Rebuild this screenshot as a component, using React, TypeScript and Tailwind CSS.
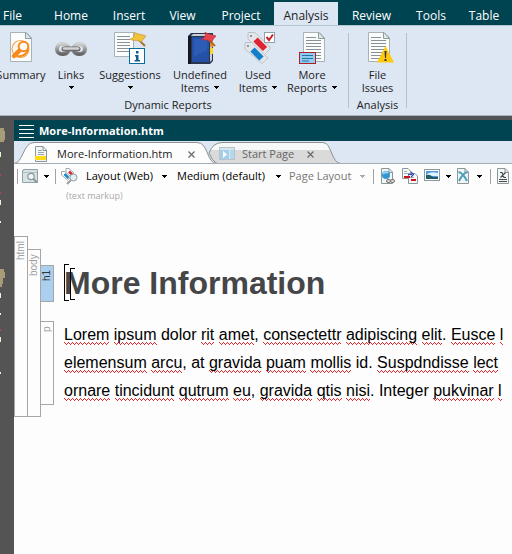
import React from "react";

const ribbonTabs = [
  { name: "File", size: "w-[41px] pr-4" },
  { name: "Home", size: "w-[60px]" },
  { name: "Insert", size: "w-14" },
  { name: "View", size: "w-[51px]" },
  { name: "Project", size: "w-[66px]" },
  { name: "Analysis", size: "w-16" },
  { name: "Review", size: "w-[67px]" },
  { name: "Tools", size: "w-[52px]" },
  { name: "Table", size: "w-[54px]" },
];

function Arrow({ className = "fill-black" }: { className?: string }) {
  return (
    <svg className={"inline-block h-[3px] w-[5px] shrink-0 " + className} viewBox="0 0 5 3" shapeRendering="crispEdges" aria-hidden="true">
      <path d="M0 0H5V1H4V2H3V3H2V2H1V1H0Z" />
    </svg>
  );
}

function PageShape({ x = 0, y = 0, w = 21, h = 30 }: { x?: number; y?: number; w?: number; h?: number }) {
  return (
    <g transform={`translate(${x} ${y})`}>
      <path d={`M.5 .5H${w - 5}L${w + 0.5} 6V${h - 0.5}H.5Z`} fill="#fbfcfc" stroke="#a9b3b5" />
      <path d={`M${w - 5.5} .5V6.500H${w + 0.5}L${w - 5} .5Z`} fill="#dfeae8" stroke="#8d9a9d" />
    </g>
  );
}

function Lines({ x, y, w, n, step = 3 }: { x: number; y: number; w: number; n: number; step?: number }) {
  return (
    <g fill="#8a9194">
      {Array.from({ length: n }, (_, i) => (
        <rect key={i} x={x} y={y + i * step} width={i < 1 ? w - 5 : w} height="1" />
      ))}
    </g>
  );
}

function SummaryIcon() {
  return (
    <svg width="32" height="32" viewBox="0 0 32 32" aria-hidden="true">
      <PageShape x={5} />
      <circle cx="15.500" cy="17" r="8.500" fill="#fff6ec" stroke="#f3a75a" strokeWidth="1.200" />
      <path d="M14.500 18.500L9 24" stroke="#f58a1f" strokeWidth="4.500" strokeLinecap="round" />
      <circle cx="18.500" cy="14.500" r="4.800" fill="#fffaf4" stroke="#f58a1f" strokeWidth="2" />
      <path d="M12 24C17 25 22 22 23 18" fill="none" stroke="#f58a1f" strokeWidth="2" />
    </svg>
  );
}

function LinksIcon() {
  return (
    <svg width="34" height="32" viewBox="0 0 34 32" aria-hidden="true">
      <defs>
        <linearGradient id="steel" x1="0" y1="0" x2="0" y2="1">
          <stop offset="0" stopColor="#d0d0d0" />
          <stop offset=".5" stopColor="#9c9c9c" />
          <stop offset="1" stopColor="#666" />
        </linearGradient>
      </defs>
      <g fill="none" stroke="url(#steel)" strokeWidth="4">
        <rect x="3" y="12" width="11.500" height="10" rx="5" />
        <rect x="19.500" y="12" width="11.500" height="10" rx="5" />
      </g>
      <path d="M10 17H24" stroke="#6c6c6c" strokeWidth="5" strokeLinecap="round" />
      <path d="M10 16.500H24" stroke="#d4d4d4" strokeWidth="2.500" strokeLinecap="round" />
    </svg>
  );
}

function SuggestionsIcon() {
  return (
    <svg width="32" height="32" viewBox="0 0 32 32" aria-hidden="true">
      <path d="M.5 .5H19.500V24.500H.5Z" fill="#fbfcfc" stroke="#a9b3b5" />
      <g fill="#8a9194">
        {[4, 7, 10, 13, 16, 19].map((y) => <rect key={y} x="3" y={y} width="13" height="1" />)}
      </g>
      <path d="M24 7L31 14" stroke="#a77432" strokeWidth="2" />
      <path d="M20 0C24 3 28 2 32 4L27 10C24 7 20 10 16 7C20 6 21 3 20 0Z" fill="#f2c23a" stroke="#bd9130" strokeWidth=".6" />
      <rect x="15.500" y="16.500" width="15" height="15" fill="#fff" stroke="#0b6a9b" />
      <path d="M22 19H24.500V21.500H22ZM21 23H24.500V28H26V29.500H20.500V28H22V24.500H21Z" fill="#0b5f92" />
    </svg>
  );
}

function UndefinedIcon() {
  return (
    <svg width="32" height="32" viewBox="0 0 32 32" aria-hidden="true">
      <path d="M4 4L7 1H29V29L26 32H4Z" fill="#2a3550" />
      <path d="M9 2H27L25 4H7Z" fill="#c9d0d8" />
      <path d="M8 5H25V30H8Z" fill="#2450a8" />
      <path d="M10 7H23V18L10 25Z" fill="#2c5cb6" />
      <path d="M26 5L28 3V28L26 30Z" fill="#c8ced3" />
      <rect x="26" y="7" width="3" height="8" fill="#f28b23" />
      <rect x="26" y="16" width="3" height="6" fill="#f8d51f" />
      <path d="M4 4H7V32H4Z" fill="#141822" />
      <path d="M24 7L31 14" stroke="#a66b35" strokeWidth="2" />
      <path d="M21 0C24 3 28 2 32 4L27 10C24 7 21 9 17 7C21 6 22 3 21 0Z" fill="#e54350" stroke="#a82630" strokeWidth=".6" />
    </svg>
  );
}

function UsedIcon() {
  return (
    <svg width="34" height="32" viewBox="0 0 34 32" aria-hidden="true">
      <path d="M7 .5H14L29 15V17L23 23L7 7Z" fill="#e3e7ea" stroke="#bcc3c9" />
      <rect x="9" y="3" width="2" height="2" fill="#8f999f" />
      <path d="M14.500 7.500L24 17" stroke="#df2332" strokeWidth="6" />
      <path d="M4 10.500H11L27 26L21 31.500L4 17Z" fill="#e3e7ea" stroke="#bcc3c9" />
      <rect x="6" y="13" width="2" height="2" fill="#8f999f" />
      <path d="M11.500 17.500L20.500 26.500" stroke="#137ecb" strokeWidth="6" />
      <rect x="23.500" y=".5" width="10" height="10" fill="#fff" stroke="#8fa2a5" />
      <path d="M25.500 5L28 8L32 2.500" fill="none" stroke="#c4232c" strokeWidth="2" />
    </svg>
  );
}

function MoreIcon() {
  return (
    <svg width="32" height="32" viewBox="0 0 32 32" aria-hidden="true">
      <PageShape x={7} w={21} h={30} />
      <Lines x={10} y={5} w={15} n={8} />
      <rect x="3.500" y="20.500" width="16" height="11" fill="#8fcdf4" stroke="#b01f24" />
      <path d="M6 23.500H17M6 26.500H17M6 29H13" stroke="#28739d" />
    </svg>
  );
}

function IssuesIcon() {
  return (
    <svg width="32" height="32" viewBox="0 0 32 32" aria-hidden="true">
      <PageShape x={6} w={21} h={30} />
      <Lines x={9} y={5} w={15} n={8} />
      <path d="M23.500 14L32 30.500H15Z" fill="#ffc90e" />
      <path d="M22.500 19H24.500L24 26H23ZM22.500 27H24.500V29H22.500Z" fill="#343434" />
    </svg>
  );
}

type Command = { icon: React.ReactNode; top: string; bottom?: string; arrow?: boolean; size: string };

const reports: Command[] = [
  { icon: <SummaryIcon />, top: "Summary", size: "w-[66px]" },
  { icon: <LinksIcon />, top: "Links", arrow: true, size: "w-[34px]" },
  { icon: <SuggestionsIcon />, top: "Suggestions", arrow: true, size: "w-[84px]" },
  { icon: <UndefinedIcon />, top: "Undefined", bottom: "Items", arrow: true, size: "w-14" },
  { icon: <UsedIcon />, top: "Used", bottom: "Items", arrow: true, size: "w-[60px]" },
  { icon: <MoreIcon />, top: "More", bottom: "Reports", arrow: true, size: "w-12" },
];

function RibbonButton({ icon, top, bottom, arrow, size }: Command) {
  return (
    <button className={"flex shrink-0 flex-col items-center whitespace-nowrap leading-[13px] " + size}>
      {icon}
      <span className="mt-1">{top}</span>
      <span className="flex h-[13px] items-center gap-[5px]">
        {bottom}
        {arrow && <Arrow />}
      </span>
    </button>
  );
}

function Choice({ label, value, size, muted }: { label: string; value: string; size: string; muted?: boolean }) {
  return (
    <label className="flex shrink-0 items-center gap-[5px]">
      <span className="sr-only">{label}</span>
      <select className={"appearance-none bg-transparent outline-none " + size + (muted ? " text-[#777]" : " text-black")}>
        <option>{value}</option>
      </select>
      <Arrow className={muted ? "fill-[#aaa]" : "fill-black"} />
    </label>
  );
}

function Rule() {
  return <span className="h-[15px] w-px shrink-0 bg-[#a2a2a2]" />;
}

function PreviewIcon() {
  return (
    <svg width="16" height="16" viewBox="0 0 16 16" aria-hidden="true">
      <path d="M.5 2.500H1.500V1.500H15.500V14.500H.5Z" fill="#d5e3e5" stroke="#93a3a5" />
      <path d="M1 4.500H15" stroke="#b4c1c3" />
      <circle cx="9" cy="8.500" r="3.200" fill="#eff7f8" stroke="#889799" strokeWidth="1.200" />
      <path d="M11 10.500L15 14.500" stroke="#889799" strokeWidth="1.800" />
    </svg>
  );
}

function TagsIcon() {
  return (
    <svg width="17" height="17" viewBox="0 0 17 17" aria-hidden="true">
      <path d="M5 .5H8L13 5L9 9L5 4Z" fill="#fff" stroke="#a1a9ac" />
      <path d="M8 3.500L11 6.500" stroke="#de2332" strokeWidth="2.500" />
      <path d="M.5 3.500H4L10 9L6.500 12L.5 7Z" fill="#fff" stroke="#a1a9ac" />
      <path d="M3.500 6L7.500 10" stroke="#1788cc" strokeWidth="2.500" />
      <path d="M10 12L6 16" stroke="#9a9c9e" strokeWidth="2" />
      <circle cx="12.500" cy="9.500" r="3.500" fill="#e3eff1" stroke="#939fa3" />
    </svg>
  );
}

function SmallPage({ children }: { children?: React.ReactNode }) {
  return (
    <svg width="14" height="16" viewBox="0 0 14 16" className="shrink-0" aria-hidden="true">
      <path d="M.5 .5H8L11.500 4V15.500H.5Z" fill="#f2f6f7" stroke="#89979a" />
      <path d="M8 .5V4.500H11.500" fill="none" stroke="#89979a" />
      {children}
    </svg>
  );
}

function Toolbar() {
  return (
    <div role="toolbar" aria-label="Editor" className="flex h-6 items-center pl-[3px] whitespace-nowrap">
      <Rule />
      <button aria-label="Preview" className="ml-1 flex items-center gap-1.5"><PreviewIcon /><Arrow /></button>
      <span className="ml-1.5 flex"><Rule /></span>
      <button aria-label="Tags" className="mr-2 ml-[5px] shrink-0"><TagsIcon /></button>
      <Choice label="Layout" value="Layout (Web)" size="w-[71px]" />
      <span className="ml-2.5 flex"><Choice label="Medium" value="Medium (default)" size="w-[94px]" /></span>
      <span className="ml-2 flex"><Choice label="Page layout" value="Page Layout" size="w-[66px]" muted /></span>
      <span className="ml-2 flex"><Rule /></span>
      <button aria-label="Hyperlink" className="ml-[7px]">
        <SmallPage>
          <circle cx="5" cy="7" r="4" fill="#3494d4" />
          <path d="M2 6Q4 3 7 5" fill="none" stroke="#9bd3f5" strokeWidth="2" />
          <rect x="5.500" y="11.500" width="4" height="3" rx="1.500" fill="#ddd" stroke="#707070" />
          <rect x="9.500" y="11.500" width="4" height="3" rx="1.500" fill="#ddd" stroke="#707070" />
        </SmallPage>
      </button>
      <button aria-label="Cross-reference" className="ml-[7px] shrink-0">
        <svg width="16" height="16" viewBox="0 0 16 16" aria-hidden="true">
          <path d="M.5 .5H6L8.500 3V10.500H.5Z" fill="#f6f8f8" stroke="#8b989b" />
          <path d="M6.500 5.500H13L15.500 8V15.500H6.500Z" fill="#f6f8f8" stroke="#8b989b" />
          <path d="M2 3.500H5M2 5.500H6M8 9.500H12" stroke="#a6afb1" />
          <path d="M2 8H8V10H2ZM9 11H14V13H9Z" fill="#cf1018" />
          <path d="M6 6.500H10M9 4L11.500 6.500L9 9" fill="none" stroke="#274ac5" strokeWidth="1.200" />
        </svg>
      </button>
      <button aria-label="Image" className="ml-1.5 flex shrink-0 items-center gap-1.5">
        <svg width="16" height="16" viewBox="0 0 16 16" aria-hidden="true">
          <rect x=".5" y="1.500" width="15" height="11" fill="#fff" stroke="#8b9b9f" />
          <rect x="2" y="3" width="12" height="8" fill="#4f9be6" />
          <path d="M3 6Q7 3 14 5V8H2Z" fill="#dff3ff" />
          <path d="M2 7Q6 6 9 9H14V11H2Z" fill="#245d64" />
        </svg>
        <Arrow />
      </button>
      <button aria-label="Variable" className="ml-1.5 flex shrink-0 items-center gap-1.5">
        <SmallPage>
          <path d="M2 13Q6 5 10.500 4M10 13Q6 5 1.500 4" fill="none" stroke="#4b9fb8" strokeWidth="2" />
        </SmallPage>
        <Arrow />
      </button>
      <span className="ml-2 flex"><Rule /></span>
      <button aria-label="Equation" className="ml-1.5">
        <SmallPage><path d="M3 4.500H5L7 9.500H9M8.500 4.500L3.500 9.500M2 11.500H10M2 13.500H10" fill="none" stroke="#454b4d" strokeWidth="1.200" /></SmallPage>
      </button>
    </div>
  );
}

function Close() {
  return (
    <svg width="7" height="7" viewBox="0 0 7 7" aria-hidden="true">
      <path d="M.5 .5L6.500 6.500M6.500 .5L.5 6.500" stroke="#686868" strokeWidth="1.200" />
    </svg>
  );
}

function DocumentTabs() {
  return (
    <div role="tablist" aria-label="Documents" className="relative flex h-[23px] items-center overflow-hidden border-b border-[#a5adb6] bg-[#dde6f3] pt-1">
      <svg className="absolute top-0 left-0 h-[23px] w-[330px]" viewBox="0 0 330 23" aria-hidden="true">
        <path d="M195 12Q199 1.500 208 1.500H309C318 1.500 317 22.500 327 22.500H203Q198 20 195 12Z" fill="#d9dad9" />
        <path d="M196 9Q200 2 208 2H309Q315 2 316 9Z" fill="#f7f8f8" />
        <path d="M195 12Q199 1.500 208 1.500H309C318 1.500 317 22.500 327 22.500H203Q198 20 195 12" fill="none" stroke="#8d9193" />
        <path d="M0 23C9 23 9 1.500 20 1.500H183C195 1.500 192 22.500 203 22.500V23Z" fill="#fdfdfd" />
        <path d="M0 22.500C9 22.500 9 1.500 20 1.500H183C195 1.500 192 22.500 203 22.500" fill="none" stroke="#8d9193" />
      </svg>
      <div className="relative flex w-[205px] shrink-0 items-center pl-[21px]">
        <button role="tab" aria-selected="true" className="flex w-[143px] items-center gap-2 whitespace-nowrap">
          <SmallPage><path d="M3 4.500H7M3 6.500H9M3 8.500H9" stroke="#9ca6a8" /><rect y="10" width="11" height="4" fill="#ffda16" /></SmallPage>
          More-Information.htm
        </button>
        <button aria-label="Close More-Information.htm" className="ml-2.5"><Close /></button>
      </div>
      <div className="relative flex shrink-0 items-center text-[#666]">
        <button role="tab" aria-selected="false" className="flex w-[80px] items-center gap-[7px] whitespace-nowrap">
          <svg width="16" height="14" viewBox="0 0 16 14" className="shrink-0" aria-hidden="true">
            <rect x=".5" y=".5" width="15" height="12" fill="#d9e5ed" stroke="#b9c2c7" />
            <rect x="1" y="3" width="9" height="9" fill="#a3cfea" />
            <path d="M4 4L8 7.500L4 11Z" fill="#fff" />
            <path d="M11 3H15V12H11Z" fill="#b4d9ed" />
          </svg>
          Start Page
        </button>
        <button aria-label="Close Start Page" className="ml-2"><Close /></button>
      </div>
    </div>
  );
}

/* A misspelled word, marked with a red zigzag. */
function W({ children }: { children: string }) {
  return (
    <span className="bg-[linear-gradient(90deg,#e8252b_1px,transparent_1px),linear-gradient(90deg,#e8252b_1px,transparent_1px),linear-gradient(90deg,#e8252b_1px,transparent_1px)] [background-size:4px_1px,2px_1px,4px_1px] [background-position:0_16px,1px_17px,2px_18px] bg-repeat-x pb-[3px]">
      {children}
    </span>
  );
}

const tag = "flex w-[14px] shrink-0 rotate-180 items-center justify-end border border-[#a6a6a6] pb-1 text-[10px] leading-3 [writing-mode:vertical-rl] font-['Liberation_Sans',Arial,sans-serif]";

function Editor() {
  return (
    <section aria-label="Document" className="overflow-hidden">
      <p className="h-12 pt-0.5 pl-[52px] text-[9px] leading-3 text-[#aaa]">(text markup)</p>
      <div className="flex">
        <div className={tag + " text-[#a0a0a0]"}>html</div>
        <div className="-ml-px flex pt-[13px]">
          <div className={tag + " text-[#a0a0a0]"}>body</div>
          <div className="-ml-px pt-4 pb-3 font-['Liberation_Sans',Arial,sans-serif] whitespace-nowrap">
            <div className="flex gap-2.5">
              <div className={tag + " bg-[#abd0ef] text-[#333]"}>h1</div>
              <h1 className="relative text-[32px] leading-[37px] font-bold text-[#454648]">
                More Information
                <span className="absolute -top-px left-0 h-[37px] w-[5px] border-y border-l border-black" />
                <span className="absolute top-[3px] left-1.5 h-8 w-[5px] border-y border-l border-black" />
              </h1>
            </div>
            <div className="mt-[19px] flex gap-2.5">
              <div className={tag + " text-[#a0a0a0]"}>p</div>
              <p className="text-base leading-7 text-black">
                <W>Lorem</W> <W>ipsum</W> dolor <W>rit</W> <W>amet</W>, <W>consectettr</W> <W>adipiscing</W> <W>elit</W>. <W>Eusce</W> <W>l</W>
                <br />
                <W>elemensum</W> <W>arcu</W>, at <W>gravida</W> <W>puam</W> <W>mollis</W> id. <W>Suspdndisse</W> <W>lect</W>
                <br />
                <W>ornare</W> <W>tincidunt</W> <W>qutrum</W> <W>eu</W>, <W>gravida</W> <W>qtis</W> <W>nisi</W>. Integer <W>pukvinar</W> <W>l</W>
              </p>
            </div>
          </div>
        </div>
      </div>
    </section>
  );
}

function Rail() {
  return (
    <aside className="w-[14px] shrink-0 bg-[#545454]">
      <svg width="6" height="270" viewBox="0 0 6 270" aria-hidden="true">
        <path d="M0 12H4V15H5V24H4V26H0ZM0 153H4V156H5V162H3V168H2V171H0Z" fill="#a89b78" />
        <path d="M0 36H1V41H0ZM0 84H1V89H0ZM0 105H1V107H0ZM0 177H1V182H0ZM0 197H1V199H0ZM0 221H1V226H0ZM0 256H1V258H0Z" fill="#f5f0dc" />
        <path d="M0 58H1V60H0ZM0 76H1V78H0ZM0 213H1V215H0Z" fill="#ba4545" />
      </svg>
    </aside>
  );
}

export default function App() {
  return (
    <div className="flex min-h-screen flex-col overflow-hidden bg-[#fdfdfd] font-['Open_Sans','Noto_Sans',sans-serif] text-[11px] leading-4 text-[#1c1c1c]">
      <nav role="tablist" aria-label="Ribbon" className="flex h-[26px] overflow-hidden border-b border-[#b3c6cf] bg-[#004351] pt-0.5 text-xs text-white">
        {ribbonTabs.map(({ name, size }) => (
          <button
            key={name}
            role="tab"
            aria-selected={name === "Analysis"}
            className={"h-6 shrink-0 pt-1 text-center " + size + (name === "Analysis" ? " bg-[#dde6f3] text-[#1c1c1c]" : "")}
          >
            {name}
          </button>
        ))}
      </nav>
      <header className="flex h-[90px] overflow-hidden border-b border-[#a9b5c0] bg-[#dde6f3] pt-1.5">
        <section aria-label="Dynamic Reports" className="-ml-3 w-[360px] shrink-0">
          <div className="flex">
            {reports.map((r) => <RibbonButton key={r.top} {...r} />)}
          </div>
          <p className="mt-[3px] text-center">Dynamic Reports</p>
        </section>
        <section aria-label="Analysis" className="mt-px h-[75px] w-[59px] shrink-0 border-x border-[#b3c0cf]">
          <div className="-mt-px flex justify-center">
            <RibbonButton icon={<IssuesIcon />} top="File" bottom="Issues" size="w-12" />
          </div>
          <p className="mt-[3px] text-center">Analysis</p>
        </section>
      </header>
      <div className="flex grow">
        <Rail />
        <main className="min-w-0 grow">
          <div className="flex h-[25px] items-center gap-[5px] border-t-4 border-[#545454] bg-[#004351] pl-[5px] font-bold text-white">
            <svg width="15" height="14" viewBox="0 0 15 14" shapeRendering="crispEdges" aria-hidden="true">
              <path d="M0 1.500H15M0 5.500H15M0 9.500H15M0 13.500H15" stroke="#fff" />
            </svg>
            More-Information.htm
          </div>
          <DocumentTabs />
          <Toolbar />
          <Editor />
        </main>
      </div>
    </div>
  );
}
